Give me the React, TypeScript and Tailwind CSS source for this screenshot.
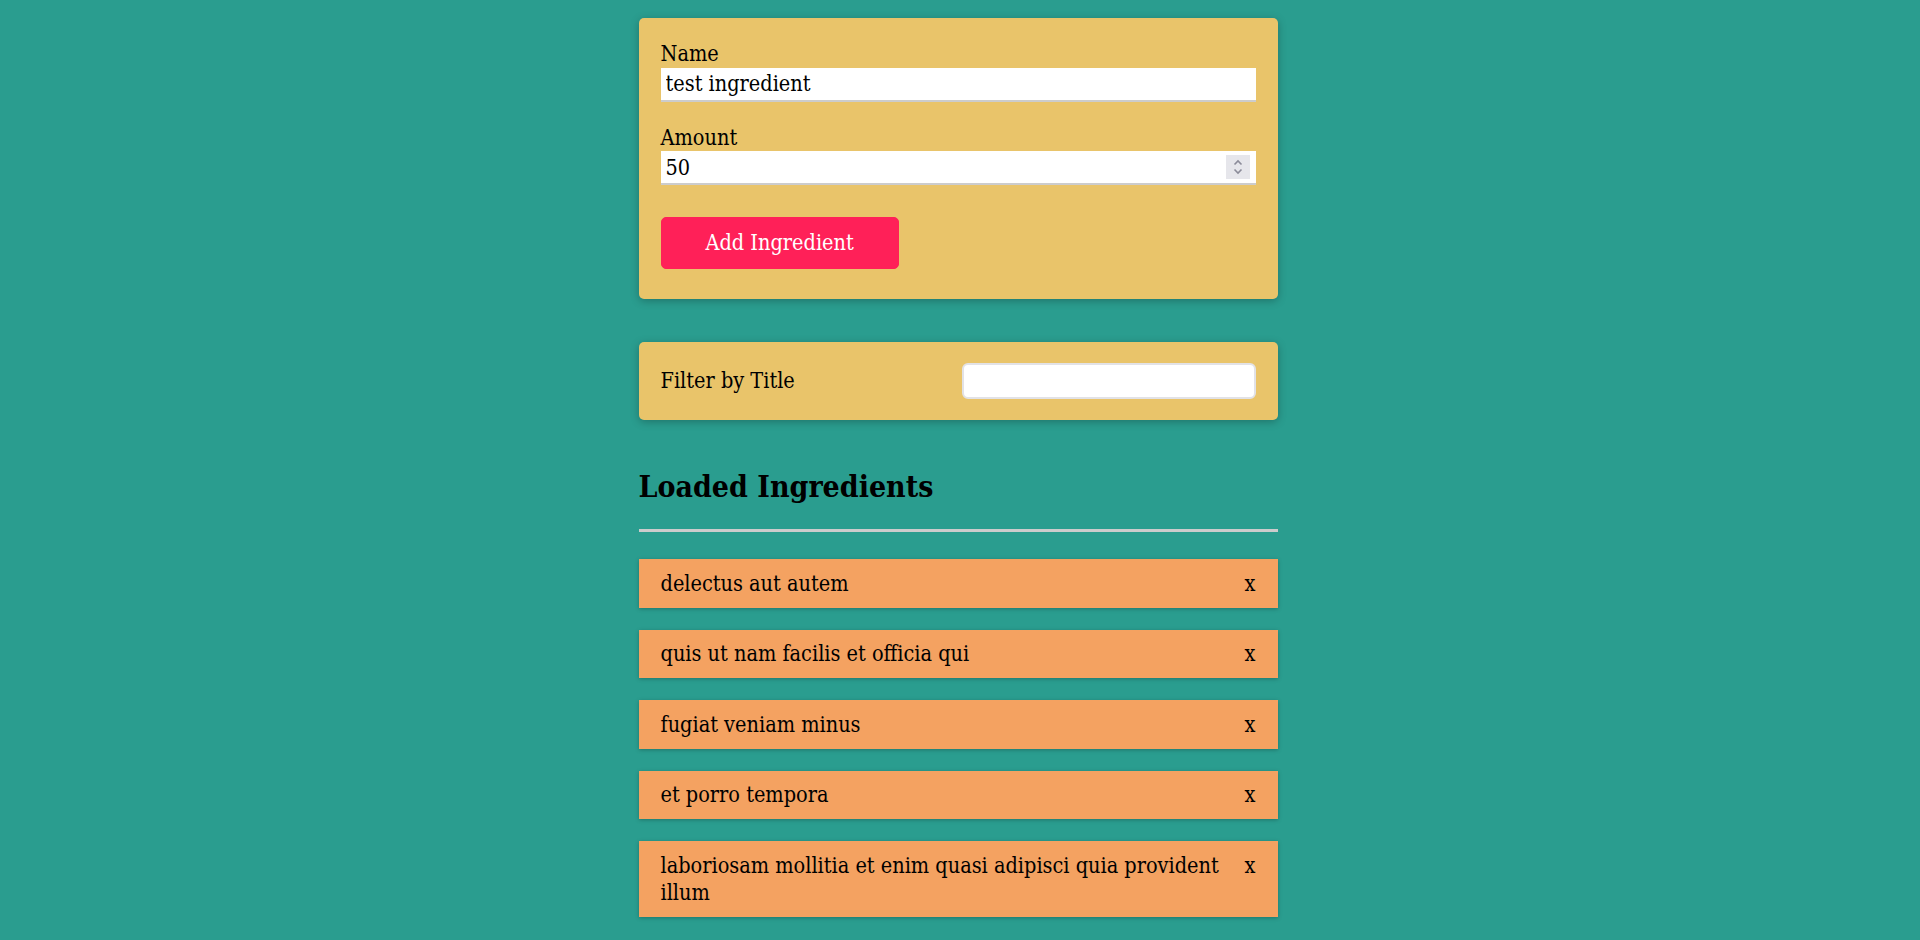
import { useState } from "react";

const items = [
  "delectus aut autem",
  "quis ut nam facilis et officia qui",
  "fugiat veniam minus",
  "et porro tempora",
  "laboriosam mollitia et enim quasi adipisci quia provident illum",
];

function Spinner() {
  return (
    <div className="absolute right-[6px] top-[4px] flex h-[24px] w-[24px] flex-col items-center justify-center bg-[#e6e6eb]">
      <svg width="12" height="18" viewBox="0 0 12 18" fill="none" stroke="#8b8b99" strokeWidth="1.6">
        <path d="M2.5 6.5 L6 3 L9.5 6.5" />
        <path d="M2.5 11.5 L6 15 L9.5 11.5" />
      </svg>
    </div>
  );
}

function IngredientForm() {
  const [name, setName] = useState("test ingredient");
  const [amount, setAmount] = useState("50");

  return (
    <section className="mx-auto w-[639px] rounded-[5px] bg-[#e9c46a] p-[22px] shadow-[0_2px_8px_rgba(0,0,0,0.26)]">
      <form onSubmit={(e) => e.preventDefault()}>
        <div>
          <label className="block">Name</label>
          <input
            className="mb-[22px] block h-[34px] w-full border-b-2 border-[#ccc] bg-white px-[5px] py-[2px] outline-none"
            value={name}
            onChange={(e) => setName(e.target.value)}
          />
        </div>
        <div>
          <label className="block">Amount</label>
          <div className="relative mb-[22px]">
            <input
              className="block h-[34px] w-full border-b-2 border-[#ccc] bg-white px-[5px] py-[2px] outline-none"
              value={amount}
              onChange={(e) => setAmount(e.target.value)}
            />
            <Spinner />
          </div>
        </div>
        <div className="flex items-center justify-between">
          <button className="mb-[8px] mt-[10px] h-[52px] rounded-[5px] border border-[#ff2058] bg-[#ff2058] px-[44px] text-white">
            Add Ingredient
          </button>
        </div>
      </form>
    </section>
  );
}

function Search() {
  return (
    <section className="mx-auto mt-[43px] flex w-[639px] items-center justify-between rounded-[5px] bg-[#e9c46a] px-[22px] py-[21px] shadow-[0_2px_8px_rgba(0,0,0,0.26)]">
      <label>Filter by Title</label>
      <input className="h-[36px] w-[294px] rounded-[6px] border-2 border-[#e2e2e6] bg-white px-2 outline-none" />
    </section>
  );
}

function IngredientList() {
  return (
    <section className="mx-auto mt-[46px] w-[639px]">
      <h2 className="border-b-[3px] border-[#ccc] pb-[21px] text-[30px] font-bold leading-[42px]">
        Loaded Ingredients
      </h2>
      <ul className="mt-[27px] flex flex-col gap-[22px]">
        {items.map((it) => (
          <li
            key={it}
            className="flex justify-between gap-3 bg-[#f4a261] px-[22px] py-[10.5px] shadow-[0_1px_4px_rgba(0,0,0,0.26)]"
          >
            <span>{it}</span>
            <span>x</span>
          </li>
        ))}
      </ul>
    </section>
  );
}

export default function App() {
  return (
    <div className="min-h-screen bg-[#2a9d8f] pb-10 pr-[4px] pt-[18px] font-['Roboto_Slab','DejaVu_Serif_Condensed','DejaVu_Serif',serif] text-[21.5px] leading-[27.5px] text-black [font-stretch:condensed]">
      <IngredientForm />
      <Search />
      <IngredientList />
    </div>
  );
}
